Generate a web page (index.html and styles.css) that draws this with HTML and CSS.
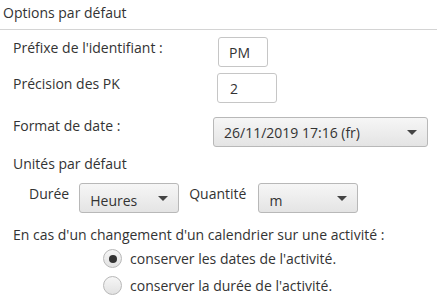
FILE: index.html
```html
<!DOCTYPE html>
<html lang="fr">
<head>
    <meta charset="UTF-8">
    <title>Options par défaut</title>
    <link rel="stylesheet" href="styles.css">
</head>
<body>
<div class="section-title">Options par défaut</div>
<div class="options-panel">
    <div class="row row-prefix">
        <label class="row-label" for="prefix">Préfixe de l'identifiant :</label>
        <input id="prefix" class="text-field field-prefix" value="PM"/>
    </div>
    <div class="row row-precision">
        <label class="row-label" for="precision">Précision des PK</label>
        <input id="precision" class="text-field field-precision" value="2"/>
    </div>
    <div class="row row-date">
        <span class="row-label">Format de date :</span>
        <div class="combo combo-date"><span>26/11/2019 17:16 (fr)</span><span class="arrow"></span></div>
    </div>
    <div class="units-title">Unités par défaut</div>
    <div class="units-row">
        <span class="unit-label">Durée</span>
        <div class="combo combo-unit"><span>Heures</span><span class="arrow"></span></div>
        <span class="unit-label">Quantité</span>
        <div class="combo combo-unit combo-qty"><span>m</span><span class="arrow"></span></div>
    </div>
    <div class="calendar-title">En cas d'un changement d'un calendrier sur une activité :</div>
    <div class="radio-group">
        <label class="radio"><span class="radio-dot checked"></span>conserver les dates de l'activité.</label>
        <label class="radio"><span class="radio-dot"></span>conserver la durée de l'activité.</label>
    </div>
</div>
</body>
</html>
```

FILE: styles.css
```css
body {
    margin: 0;
    width: 437px;
    height: 302px;
    overflow: hidden;
    background: #ffffff;
    font-family: "Open Sans", "Noto Sans", sans-serif;
    font-size: 14px;
    color: #333333;
}

.section-title {
    height: 29px;
    padding-left: 3px;
    line-height: 26px;
    border-bottom: 1px solid #d4d4d4;
}

.options-panel {
    padding-left: 13px;
    display: flex;
    flex-direction: column;
}

.row {
    display: flex;
    align-items: flex-start;
}

.row-label {
    width: 204px;
    line-height: 18px;
}

.row-prefix {
    margin-top: 7px;
    height: 30px;
}

.row-prefix .row-label {
    margin-top: 2px;
}

.row-precision {
    margin-top: 6px;
    height: 30px;
}

.row-precision .row-label {
    margin-top: 2px;
}

.row-date {
    margin-top: 14px;
    height: 30px;
}

.text-field {
    box-sizing: border-box;
    height: 30px;
    border: 1px solid #c6c6c6;
    border-radius: 3px;
    padding: 0 0 0 10px;
    font-family: inherit;
    font-size: 14px;
    color: #333333;
    background: #ffffff;
}

.field-prefix {
    width: 50px;
    margin-left: 1px;
}

.field-precision {
    width: 60px;
    padding-left: 12px;
}

.combo {
    box-sizing: border-box;
    height: 30px;
    display: flex;
    align-items: center;
    justify-content: space-between;
    padding: 0 10px 0 10px;
    border: 1px solid #b8b8b8;
    border-radius: 3px;
    background: linear-gradient(#f6f6f6, #e4e4e4);
}

.combo-date {
    width: 215px;
    margin-left: -4px;
}

.combo-unit {
    width: 100px;
    padding-top: 4px;
}

.combo-unit .arrow {
    margin-top: -4px;
}

.arrow {
    width: 0;
    height: 0;
    border-left: 5px solid transparent;
    border-right: 5px solid transparent;
    border-top: 5px solid #444444;
}

.units-title {
    margin-top: 8px;
    line-height: 18px;
}

.units-row {
    margin-top: 10px;
    padding-left: 16px;
    display: flex;
    align-items: flex-start;
    gap: 10px;
}

.combo-qty {
    margin-left: 2px;
}

.unit-label {
    line-height: 18px;
    margin-top: 2px;
}

.calendar-title {
    margin-top: 13px;
    line-height: 18px;
}

.radio-group {
    padding-left: 90px;
    margin-top: 5px;
    display: flex;
    flex-direction: column;
    gap: 8px;
}

.radio {
    display: flex;
    align-items: center;
    gap: 8px;
    line-height: 19px;
}

.radio-dot {
    box-sizing: border-box;
    width: 19px;
    height: 19px;
    border: 1px solid #b8b8b8;
    border-radius: 50%;
    background: linear-gradient(#f6f6f6, #e2e2e2);
    display: flex;
    align-items: center;
    justify-content: center;
}

.radio-dot.checked::after {
    content: "";
    width: 8px;
    height: 8px;
    border-radius: 50%;
    background: #333333;
}
```
